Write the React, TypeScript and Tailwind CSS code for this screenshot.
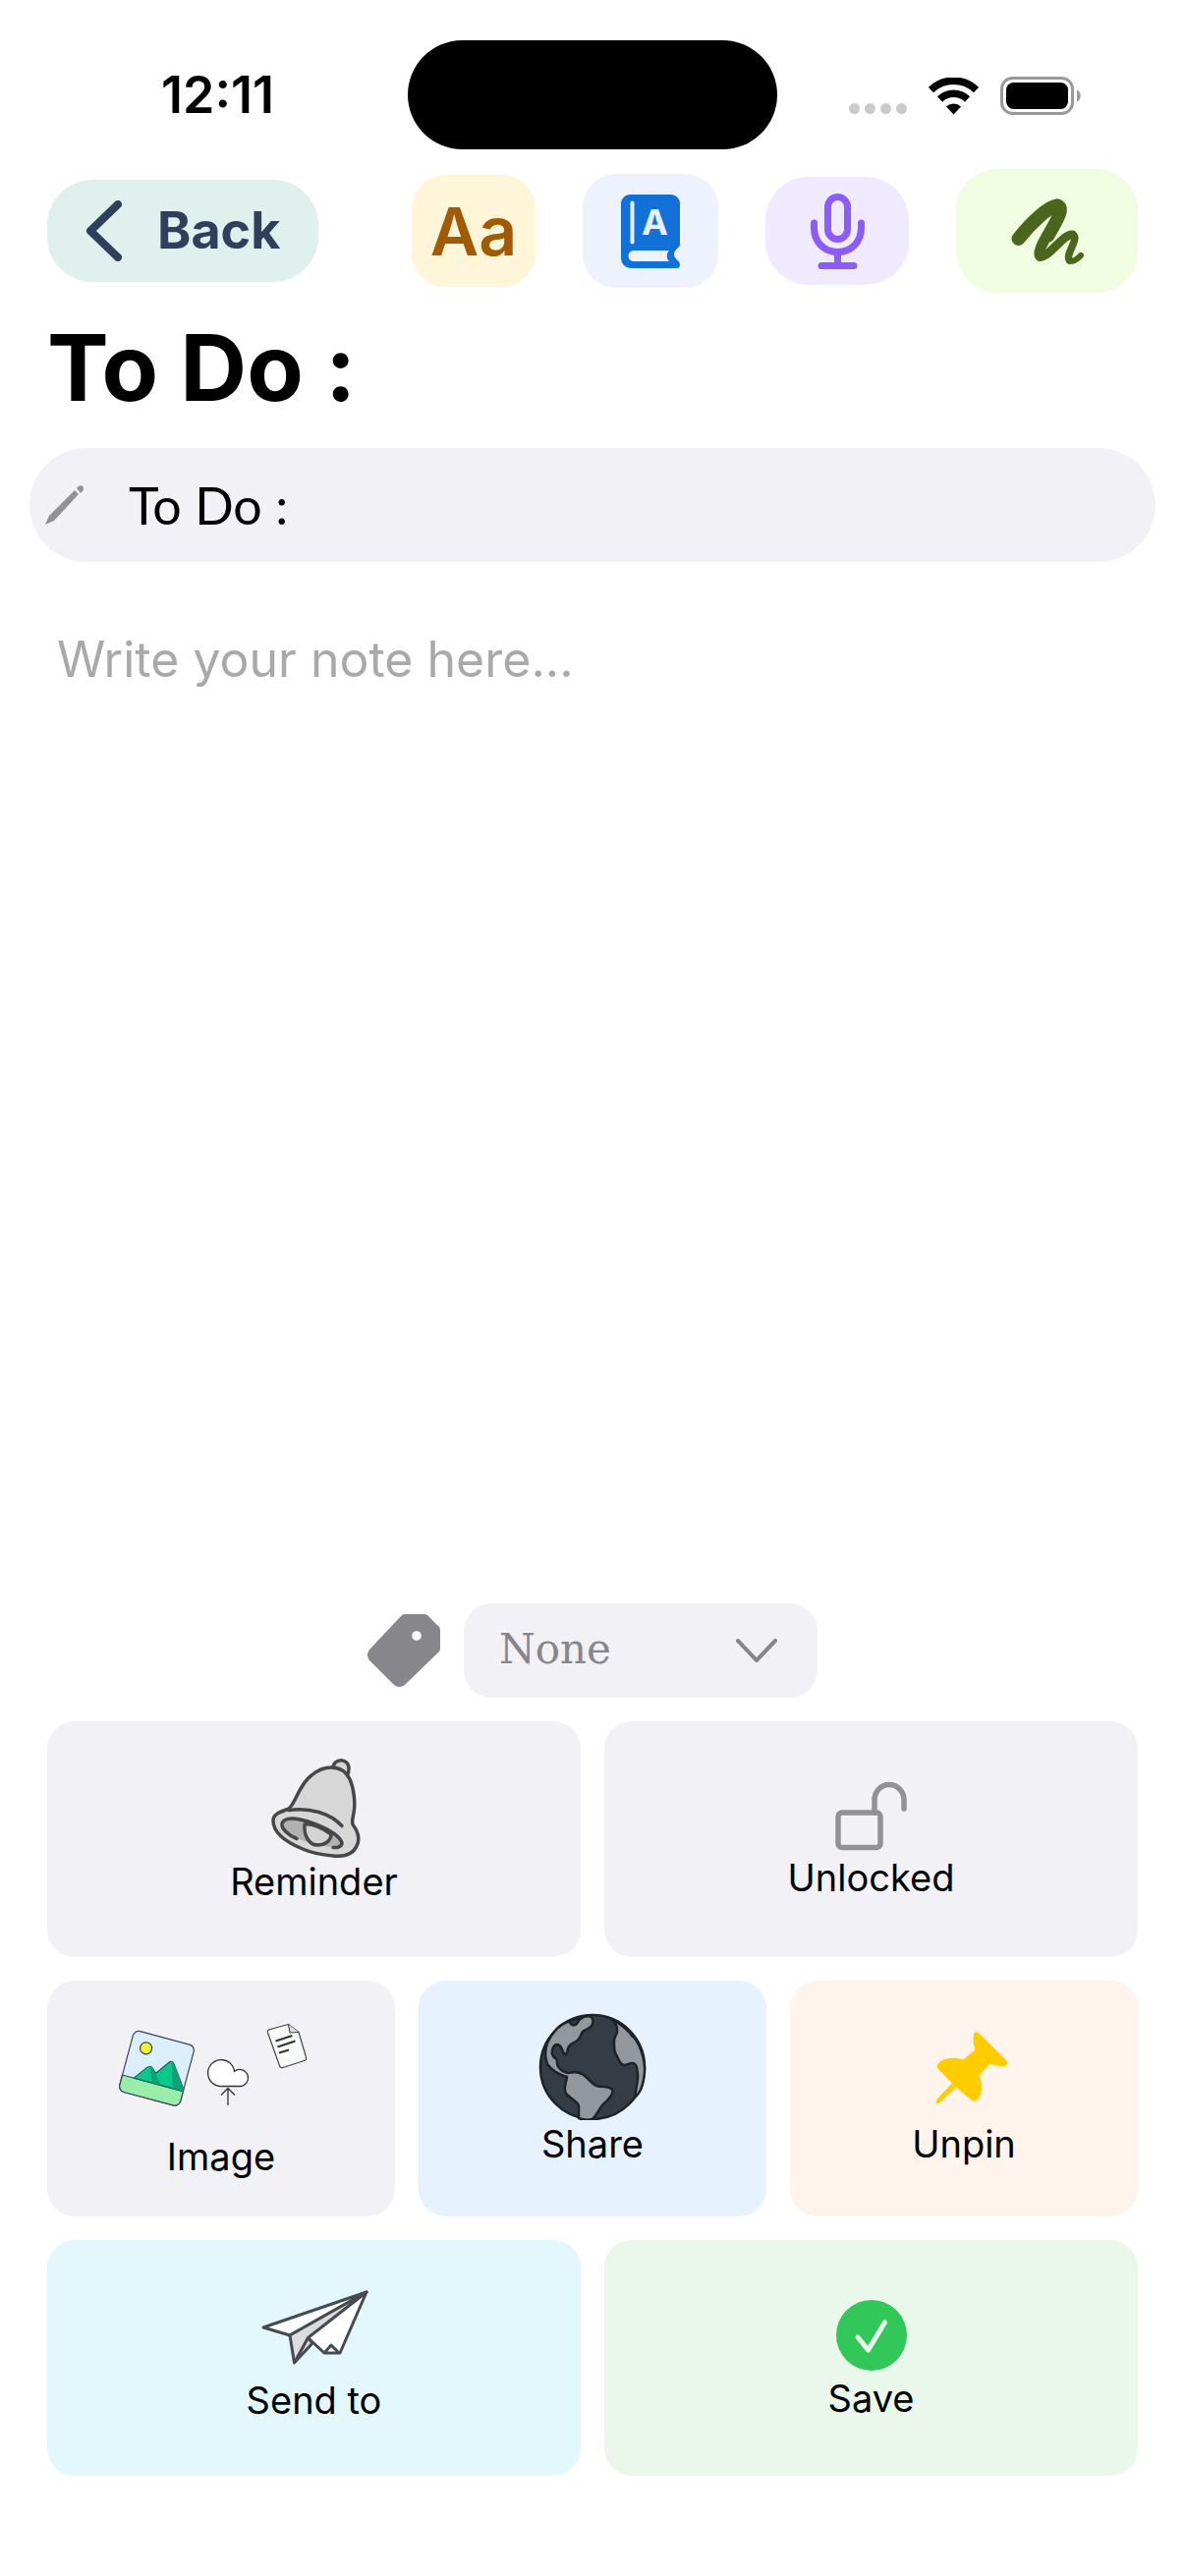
import type { ReactNode } from 'react';

function SignalDots() {
  return (
    <div className="flex gap-[5px] self-end pb-px">
      <span className="size-[11px] rounded-full bg-[#cbcbcb]" />
      <span className="size-[11px] rounded-full bg-[#cbcbcb]" />
      <span className="size-[11px] rounded-full bg-[#cbcbcb]" />
      <span className="size-[11px] rounded-full bg-[#cbcbcb]" />
    </div>
  );
}

function WifiIcon() {
  return (
    <svg width="51" height="38" viewBox="0 0 51 38" fill="none" stroke="#000">
      <path d="M2.5 12.5a33 33 0 0 1 46 0" strokeWidth="7.5" />
      <path d="M11.5 22a20 20 0 0 1 28 0" strokeWidth="7.5" />
      <path d="M25.5 37.5 18 29.5a11 11 0 0 1 15 0Z" fill="#000" stroke="none" />
    </svg>
  );
}

function BatteryIcon() {
  return (
    <svg width="83" height="39" viewBox="0 0 83 39" fill="none">
      <rect x="1.5" y="1.5" width="72" height="36" rx="11" stroke="#999" strokeWidth="3" />
      <rect x="6" y="6" width="63" height="27" rx="7.5" fill="#000" />
      <path d="M78 13.5c5 2 5 10 0 12Z" fill="#999" />
    </svg>
  );
}

function StatusBar() {
  return (
    <div className="grid grid-cols-[1fr_376px_1fr] items-center pt-[41px]">
      <span className="pl-7 text-center text-[52px] font-semibold leading-[60px]">
        12:11
      </span>
      <div className="h-[111px] rounded-full bg-black" />
      <div className="flex items-center justify-center gap-[22px] pr-8 pt-[2px]">
        <SignalDots />
        <WifiIcon />
        <BatteryIcon />
      </div>
    </div>
  );
}

function BookIcon() {
  return (
    <svg width="60" height="75" viewBox="0 0 60 75">
      <path
        d="M9 0h42a9 9 0 0 1 9 9v42c0 3-6 5-6 10s6 6 6 10-2 4-4 4H10A10 10 0 0 1 0 65V9a9 9 0 0 1 9-9Z"
        fill="#1271d8"
      />
      <path d="M11.5 8.5v40" stroke="#eaf1fe" strokeWidth="4" strokeLinecap="round" />
      <path d="M13 57h36c-3 3-3 8 0 11H13a5.5 5.5 0 0 1 0-11Z" fill="#eef3ff" />
      <text
        x="34.5"
        y="41"
        textAnchor="middle"
        fontFamily="Inter, sans-serif"
        fontSize="36"
        fontWeight="700"
        fill="#e6f0fe"
      >
        A
      </text>
    </svg>
  );
}

function MicIcon() {
  return (
    <svg
      width="55"
      height="77"
      viewBox="0 0 55 77"
      fill="none"
      stroke="#8b5cf6"
      strokeWidth="7"
      strokeLinecap="round"
    >
      <rect x="17.5" y="3.5" width="20" height="43" rx="10" />
      <path d="M3.5 30v5c0 14 10 24.5 24 24.5S51.5 49 51.5 35v-5M27.5 60v13M11 73.5h33" />
    </svg>
  );
}

function ScribbleIcon() {
  return (
    <svg
      width="74"
      height="67"
      viewBox="0 0 74 67"
      fill="none"
      stroke="#4b661c"
      strokeLinecap="round"
    >
      <path d="M7.5 41C20 25 38 8 47 7.5" strokeWidth="14" />
      <path d="M47 7c9 2-2 18-9 31" strokeWidth="13" />
      <path d="M47 9C56 14 24 50 29.5 58.5" strokeWidth="11" />
      <path d="M29.5 58.5C36 63 54 35 62.5 37" strokeWidth="9" />
      <path d="M62.5 37c8 3-8 20-3 26" strokeWidth="7.5" />
      <path d="M59.5 63c3 2 8-1 11.5-5" strokeWidth="6" />
    </svg>
  );
}

function Toolbar() {
  return (
    <header className="mt-5 flex items-center justify-between px-12">
      <button
        type="button"
        className="flex h-[104px] w-[276px] items-center rounded-[46px] bg-[#dff0ed] pl-10 text-[52px] font-bold text-[#2f3f5c]"
      >
        <svg
          width="36"
          height="62"
          viewBox="0 0 36 62"
          fill="none"
          stroke="currentColor"
          strokeWidth="8"
          strokeLinecap="round"
          strokeLinejoin="round"
          className="mr-9"
        >
          <path d="M32 4 4 31l28 27" />
        </svg>
        Back
      </button>
      <div className="flex items-center gap-12">
        <button
          type="button"
          aria-label="Text style"
          className="h-[114px] w-[126px] rounded-[34px] bg-[#fff5d9] text-[68px] font-semibold leading-[68px] text-[#a25b04]"
        >
          Aa
        </button>
        <button
          type="button"
          aria-label="Dictionary"
          className="flex h-[116px] w-[138px] items-center justify-center rounded-[34px] bg-[#eef2ff]"
        >
          <BookIcon />
        </button>
        <button
          type="button"
          aria-label="Dictate"
          className="flex h-[110px] w-[146px] items-center justify-center rounded-[44px] bg-[#f0eafe]"
        >
          <MicIcon />
        </button>
        <button
          type="button"
          aria-label="Draw"
          className="flex h-[126px] w-[185px] items-center justify-center rounded-[42px] bg-[#f0fde0]"
        >
          <ScribbleIcon />
        </button>
      </div>
    </header>
  );
}

function PencilIcon() {
  return (
    <svg width="42" height="42" viewBox="0 0 42 42" fill="#919196">
      <path d="m1 41 4-9L31 6l4 4L10 37Z" />
      <path d="m33 4 2-2c3-2 7 1 4 5l-2 2Z" />
    </svg>
  );
}

function TagIcon() {
  return (
    <svg width="74" height="74" viewBox="0 0 74 74">
      <path
        d="M39 0h18c2 0 3 0 5 2l10 10c2 2 2 3 2 5v17c0 2 0 3-2 5L39 71c-4 4-9 4-13 0L3 48c-4-4-4-9 0-13L34 2c2-2 3-2 5-2Z"
        fill="#87868b"
      />
      <circle cx="50" cy="22" r="4.8" fill="#fff" />
    </svg>
  );
}

function BellIcon() {
  return (
    <svg
      width="110"
      height="106"
      viewBox="0 0 110 106"
      stroke="#474747"
      strokeWidth="3.5"
      strokeLinecap="round"
      strokeLinejoin="round"
      fill="none"
    >
      <path d="M74 15C74 4 90 4 90 15c0 3 0 5-2 8" fill="#d4d4d4" />
      <path
        d="M29 56c8-8 10-24 23-34 6-5 13-8 20-8 8 0 15 4 19 12 4 9 6 24 4 34-1 6-2 9-1 12 6 8 7 16 4 22-4 9-14 11-24 10-11-1-22-3-31-7-17-7-30-17-30-29 0-7 8-9 16-12Z"
        fill="#d7d7d7"
      />
      <path
        d="M22 71c3-8 18-5 32 0 13 5 28 12 29 20 0 3-4 5-9 4-14 0-27-5-37-9-8-4-15-9-15-15Z"
        fill="#b1b1b1"
        stroke="none"
      />
      <path d="M45 72c8-1 19 4 27 10 0 7-7 11-14 11-8 0-14-9-13-21Z" fill="#d4d4d4" />
      <path d="M29 57.5c21-3 42 3 54 16M37 86.5C28 83 21 76 22 71c3-8 18-5 32 0 13 5 27 12 29 20 0 3-4 5-9 4.5" />
    </svg>
  );
}

function UnlockIcon() {
  return (
    <svg
      width="112"
      height="98"
      viewBox="0 0 112 98"
      fill="none"
      stroke="#919196"
      strokeWidth="5.5"
      strokeLinecap="round"
    >
      <rect x="22" y="56" width="43" height="35.5" rx="4" />
      <path d="M59 56V43c0-8 6-15.5 15-15.5S89 35 89 43v9" />
    </svg>
  );
}

function MediaIcon() {
  return (
    <svg width="240" height="138" viewBox="0 0 240 138" strokeLinejoin="round">
      <g transform="translate(54.5 72.3) rotate(15)" stroke="#3c4450" strokeWidth="1.2">
        <rect x="-32" y="-32" width="64" height="64" rx="6" fill="#daeefc" />
        <path d="M-32 15.500h64V26a6 6 0 0 1-6 6h-52a6 6 0 0 1-6-6Z" fill="#98eda9" />
        <path
          d="M-20 15.5-10 2q3-4 6-1l4.500 4L10-8.500q3-4 6 0l16 22v2Z"
          fill="#08c98c"
          stroke="#156350"
        />
        <path d="m-7 0 6 15.500h10L-4 1ZM13-10l8 25.500h11v-2L16-8.500Z" fill="#0fa277" stroke="none" />
        <circle cx="-15.8" cy="-17" r="6" fill="#f2f531" />
      </g>
      <path
        d="M121 90.5a13.5 13.5 0 1 1 12.5-15 8.500 8.500 0 1 1 5 15Z"
        fill="#fff"
        stroke="#333"
        strokeWidth="1.3"
      />
      <path d="M127 110V92.5m-7 7 7-7 7 7" fill="none" stroke="#333" strokeWidth="1.3" />
      <path
        d="m170 32.5 18.5-5 10.5 8L206.5 61c.5 2 0 3-2 3.5L183 71.5c-2 .5-3 0-3.5-2L167.5 36c-.5-2 .5-3 2.5-3.5Z"
        fill="#f8fbf8"
        stroke="#444"
        strokeWidth="1.2"
      />
      <path d="m188.5 27.5 1.5 8.5 9-.5" fill="#ddd" stroke="#444" strokeWidth="1.2" />
      <path
        d="m175.5 44.5 17-5.5M177.5 50.5l18-6M179 56.5l10-3"
        stroke="#333"
        strokeWidth="2"
      />
    </svg>
  );
}

function GlobeIcon() {
  return (
    <svg
      width="112"
      height="112"
      viewBox="0 0 112 112"
      stroke="#1d2228"
      strokeWidth="2.5"
      strokeLinejoin="round"
    >
      <circle cx="56" cy="58" r="53" fill="#343d46" />
      <g fill="#92999e">
        <path d="M45 8c3-2 8-2 10-1 2 3 2 6 0 9-3 4-6 3-9 6-2 3-3 8-7 10-3 2-7 3-8 7 0 3-2 7-3 6-2-1-2-4-4-7-2-4-6-4-8 0s-2 6 0 9 4 2 4 5c-1 5 4 11 11 12 5-1 10-2 14 1 6 3 9 9 15 12 6 2 13 0 16 4 2 4-3 9-6 12-7 5-8 12-14 18-4 1-9 1-14-1v-13c-2-4-8-7-13-12-3-6 0-10 1-17-7-2-15-6-20-13C5 41 10 30 18 21c4-5 9-8 15-10 0 3 3 5 5 4 4-1 3-6 7-7Z" />
        <path d="M76 10c3 4 6 6 5 13-2 4-4 6-3 12 0 5 0 8 3 12 2 4 3 8 7 9 4 0 8-4 11-1 3 2 2 6 3 10 1 8-3 14-2 23 5-4 8-14 9-24 1-13-5-32-13-38l-3-4c-5-5-11-9-17-12Z" />
      </g>
      <path d="M33 11c0 3 3 5 5 4 4-1 3-6 7-7Z" fill="#343d46" />
    </svg>
  );
}

function PinIcon() {
  return (
    <svg width="112" height="112" viewBox="0 0 112 112" fill="#ffcc00">
      <path d="M66 25c0-3 3-4 6-1l27 27c3 3 1 6-3 6-5 0-10-1-14-2L71.5 67c2 5 3 9 2.5 14-.5 4-2 8-4 10-2 2-4.5 2-7 0L48 78.5 34 92c-2 2-4 3-6.5 3.5C28 92 29 90 31 88l13-13.5L30 60c-2-2-1-5 1-7 6-5 16-5 24-2.5l12.5-10C66 36 65 30 66 25Z" />
    </svg>
  );
}

function PaperPlaneIcon() {
  return (
    <svg
      width="112"
      height="106"
      viewBox="0 0 112 106"
      stroke="#454b50"
      strokeWidth="3"
      strokeLinejoin="round"
    >
      <path d="M109 20 4 56l27 8Z" fill="#fff" />
      <path d="M109 20 31 64l4.5 28L54 72l-4-5Z" fill="#dcdcde" />
      <path d="m109 20-27 62H66L49.5 66.5Z" fill="#fff" />
      <path d="m66 82 7-8 8 8M49.5 66.5 35.5 92" fill="none" />
    </svg>
  );
}

function SaveIcon() {
  return (
    <svg width="112" height="102" viewBox="0 0 112 102">
      <circle cx="56" cy="62" r="36" fill="#32c759" />
      <path
        d="m42 64 10.5 13L69.5 49"
        fill="none"
        stroke="#ecf9ee"
        strokeWidth="5"
        strokeLinecap="round"
        strokeLinejoin="round"
      />
    </svg>
  );
}

type ActionTileProps = {
  label: string;
  className: string;
  children: ReactNode;
};

function ActionTile({ label, className, children }: ActionTileProps) {
  return (
    <button
      type="button"
      className={`flex h-60 flex-col items-center justify-center rounded-[28px] pb-5 text-[38px] leading-[48px] ${className}`}
    >
      {children}
      {label}
    </button>
  );
}

export default function App() {
  return (
    <main className="flex min-h-screen flex-col bg-white pb-[102px] font-[Inter,sans-serif] text-black">
      <StatusBar />
      <Toolbar />

      <h1 className="mt-4 px-12 text-[94px] font-bold leading-[120px]">To Do :</h1>

      <label className="mx-[30px] mt-[22px] flex h-[116px] items-center gap-11 rounded-full bg-[#f2f1f6] pl-[15px] pr-10">
        <PencilIcon />
        <input
          type="text"
          aria-label="Title"
          defaultValue="To Do :"
          className="min-w-0 flex-1 bg-transparent font-[Lato,sans-serif] text-[52px] outline-none"
        />
      </label>

      <textarea
        aria-label="Note"
        placeholder="Write your note here..."
        className="mx-[58px] mt-16 flex-1 resize-none bg-transparent text-[50px] leading-[70px] outline-none placeholder:text-[#a9a9a9]"
      />

      <div className="mb-6 flex items-center justify-center gap-6">
        <TagIcon />
        <div className="relative">
          <select
            aria-label="Tag"
            defaultValue="None"
            className="h-24 w-[360px] appearance-none rounded-[28px] bg-[#f2f1f6] pb-1 pl-9 font-['DejaVu_Serif',serif] text-[42px] text-[#87868b] outline-none"
          >
            <option>None</option>
          </select>
          <svg
            width="42"
            height="24"
            viewBox="0 0 42 24"
            fill="none"
            stroke="#87868b"
            strokeWidth="4"
            strokeLinecap="round"
            strokeLinejoin="round"
            className="pointer-events-none absolute right-[41px] top-9"
          >
            <path d="m2 2 19 20L40 2" />
          </svg>
        </div>
      </div>

      <div className="grid grid-cols-6 gap-6 px-12">
        <ActionTile label="Reminder" className="col-span-3 bg-[#f2f1f6]">
          <BellIcon />
        </ActionTile>
        <ActionTile label="Unlocked" className="col-span-3 bg-[#f2f1f6]">
          <UnlockIcon />
        </ActionTile>
        <ActionTile label="Image" className="col-span-2 bg-[#f2f1f6]">
          <MediaIcon />
        </ActionTile>
        <ActionTile label="Share" className="col-span-2 bg-[#e6f3ff]">
          <GlobeIcon />
        </ActionTile>
        <ActionTile label="Unpin" className="col-span-2 bg-[#fff4ec]">
          <PinIcon />
        </ActionTile>
        <ActionTile label="Send to" className="col-span-3 bg-[#e3f8fc]">
          <PaperPlaneIcon />
        </ActionTile>
        <ActionTile label="Save" className="col-span-3 bg-[#eaf8eb]">
          <SaveIcon />
        </ActionTile>
      </div>
    </main>
  );
}
